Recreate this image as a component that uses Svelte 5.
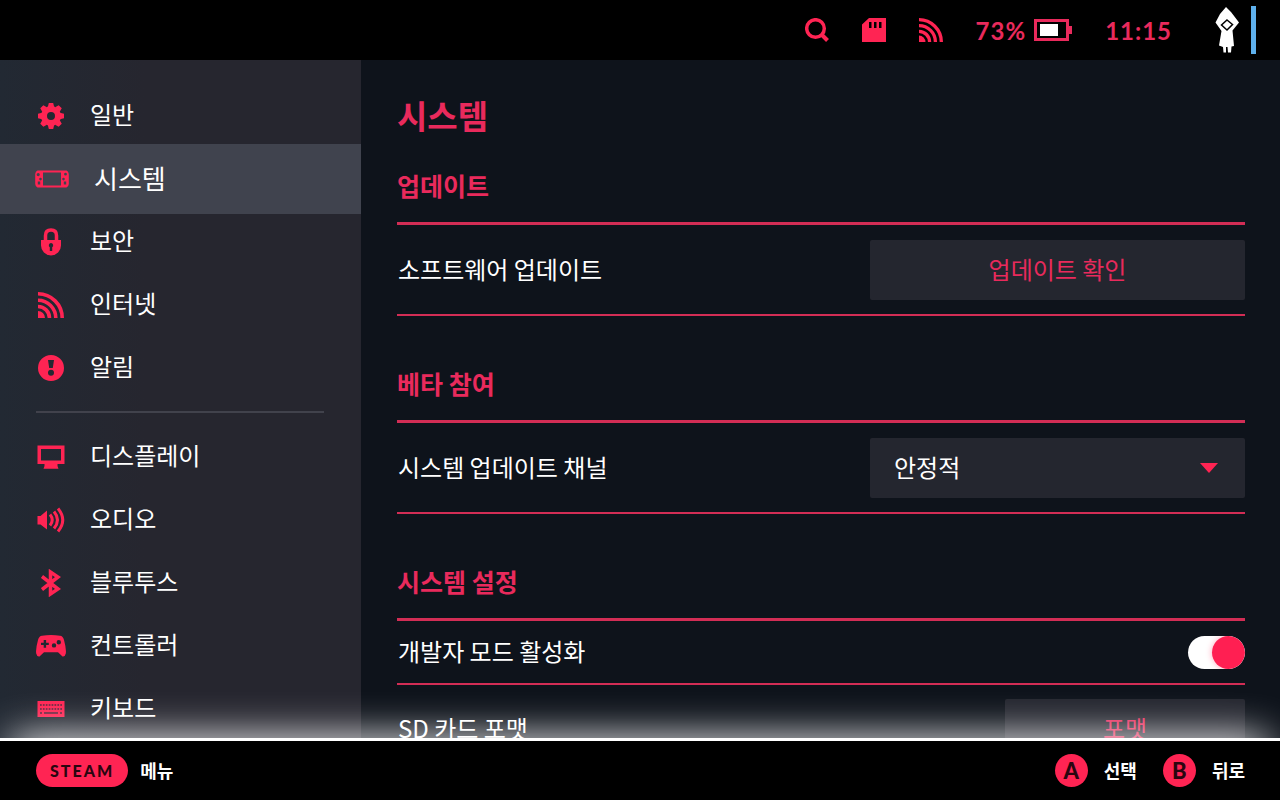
<script>
  const primary = [
    { id: 'general', label: '일반' },
    { id: 'system', label: '시스템' },
    { id: 'security', label: '보안' },
    { id: 'internet', label: '인터넷' },
    { id: 'notice', label: '알림' }
  ];
  const secondary = [
    { id: 'display', label: '디스플레이' },
    { id: 'audio', label: '오디오' },
    { id: 'bluetooth', label: '블루투스' },
    { id: 'controller', label: '컨트롤러' },
    { id: 'keyboard', label: '키보드' }
  ];
  const keyRow = [0, 1, 2, 3, 4, 5, 6, 7];
  const teeth = [0, 45, 90, 135, 180, 225, 270, 315];

  let current = $state('system');
  let channel = $state('stable');
  let devMode = $state(true);
</script>

{#snippet waves()}
  <path d="M0 19A7 7 0 0 1 7 26H0Z" fill="currentColor" />
  <g fill="none" stroke="currentColor" stroke-width="3.600">
    <path d="M0 14.500A11.500 11.500 0 0 1 11.500 26" />
    <path d="M0 8.200A17.800 17.800 0 0 1 17.800 26" />
    <path d="M0 1.800A24.200 24.200 0 0 1 24.200 26" />
  </g>
{/snippet}

{#snippet icon(id)}
  {#if id === 'general'}
    <svg width="26" height="26" viewBox="-13 -13 26 26" fill="currentColor" aria-hidden="true">
      <circle r="7" fill="none" stroke="currentColor" stroke-width="6" />
      {#each teeth as a}
        <path d="M-3.200 -9L-2.200 -13H2.200L3.200 -9Z" transform="rotate({a})" />
      {/each}
    </svg>
  {:else if id === 'system'}
    <svg width="34" height="18" viewBox="0 0 34 18" fill="currentColor" aria-hidden="true">
      <path fill-rule="evenodd" d="M2.500 0.500H31.500Q33.500 1 33.800 4V14Q33.500 17 31.500 17.500H2.500Q0.500 17 0.200 14V4Q0.500 1 2.500 0.500ZM8 2.500V15.500H26V2.500ZM3.200 3A1.600 1.600 0 1 0 3.200 6.200A1.600 1.600 0 1 0 3.200 3ZM5.500 7.800A1.300 1.300 0 1 0 5.500 10.400A1.300 1.300 0 1 0 5.500 7.800ZM2.800 11.500V14.500H5.200V11.500ZM30.500 2.800A1.400 1.400 0 1 0 30.500 5.600A1.400 1.400 0 1 0 30.500 2.800ZM28.500 7.800A1.300 1.300 0 1 0 28.500 10.400A1.300 1.300 0 1 0 28.500 7.800ZM28.800 11.500V14.500H31.200V11.500Z" />
    </svg>
  {:else if id === 'security'}
    <svg width="22" height="28" viewBox="0 0 22 28" fill="currentColor" aria-hidden="true">
      <path d="M5.500 15V7.500Q5.500 2 11 2T16.500 7.500V15" fill="none" stroke="currentColor" stroke-width="3.500" />
      <path fill-rule="evenodd" d="M1 12H21V17.500A10 10 0 0 1 1 17.500ZM11 15A2.300 2.300 0 0 0 9.800 19.200V23H12.200V19.200A2.300 2.300 0 0 0 11 15Z" />
    </svg>
  {:else if id === 'internet'}
    <svg width="26" height="26" viewBox="0 0 26 26" aria-hidden="true">{@render waves()}</svg>
  {:else if id === 'notice'}
    <svg width="26" height="26" viewBox="0 0 26 26" fill="currentColor" aria-hidden="true">
      <path fill-rule="evenodd" d="M13 0A13 13 0 1 1 13 26A13 13 0 1 1 13 0ZM10 5L11.200 13H14.800L16 5ZM13 14.800A3 3 0 1 0 13 20.800A3 3 0 1 0 13 14.800Z" />
    </svg>
  {:else if id === 'display'}
    <svg width="28" height="24" viewBox="0 0 28 24" fill="currentColor" aria-hidden="true">
      <path fill-rule="evenodd" d="M0.500 0.500H27.500V19H20.500V21L21.500 23.800H6.500L7.500 21V19H0.500ZM4 4V15.500H24V4Z" />
    </svg>
  {:else if id === 'audio'}
    <svg width="28" height="26" viewBox="0 0 28 26" fill="none" stroke="currentColor" stroke-width="3" aria-hidden="true">
      <path d="M0.500 9H3.500L10 3.500V22.500L3.500 17.500H0.500Z" fill="currentColor" stroke="none" />
      <path d="M13 7.500Q17.500 13 13 18.500" />
      <path d="M17 4.500Q24 13 17 21.500" />
      <path d="M21 1.500Q30.500 13 21 24.500" />
    </svg>
  {:else if id === 'bluetooth'}
    <svg width="20" height="28" viewBox="0 0 20 28" fill="none" stroke="currentColor" stroke-width="3.500" aria-hidden="true">
      <path d="M1 7.500L17 20L9.500 25V3L17 8L1 20.500" />
    </svg>
  {:else if id === 'controller'}
    <svg width="30" height="22" viewBox="0 0 30 22" fill="currentColor" aria-hidden="true">
      <path fill-rule="evenodd" d="M6 0.800Q15 -0.800 24 0.800Q27 1 28 5Q30.500 14 29.800 18.500Q29 22 26.500 21.500L22 17.200H8L3.500 21.500Q1 22 0.200 18.500Q-0.500 14 2 5Q3 1 6 0.800ZM7.700 5V7.700H5V10.100H7.700V12.800H10.100V10.100H12.800V7.700H10.100V5ZM22.800 5A2.200 2.200 0 1 0 22.800 9.400A2.200 2.200 0 1 0 22.800 5ZM18 8.200A2.200 2.200 0 1 0 18 12.600A2.200 2.200 0 1 0 18 8.200Z" />
    </svg>
  {:else}
    <svg width="28" height="16" viewBox="0 0 28 16" aria-hidden="true">
      <rect x="0.500" width="27" height="16" fill="currentColor" />
      <g fill="#7a2440">
        {#each keyRow as k}
          <rect x={3 + k * 2.900} y="3" width="1.700" height="2" />
          <rect x={3 + k * 2.900} y="7" width="1.700" height="2" />
        {/each}
        <rect x="3" y="11" width="2" height="2" />
        <rect x="7" y="11" width="14" height="2" />
        <rect x="23" y="11" width="2" height="2" />
      </g>
    </svg>
  {/if}
{/snippet}

{#snippet navItem(item)}
  <li>
    <button class="nav-item" class:selected={current === item.id} onclick={() => (current = item.id)}>
      <span class="nav-icon">{@render icon(item.id)}</span>
      <span class="nav-label">{item.label}</span>
    </button>
  </li>
{/snippet}

<div class="shell">
  <header class="topbar">
    <button class="status-button" aria-label="검색">
      <svg width="24" height="24" viewBox="0 0 24 24" fill="none" stroke="currentColor" stroke-width="3.500" aria-hidden="true">
        <circle cx="10.500" cy="10.500" r="8.800" />
        <path d="M16.500 16.500L22.500 22.500" stroke-width="4" />
      </svg>
    </button>
    <svg width="24" height="24" viewBox="0 0 24 24" aria-hidden="true">
      <path fill="currentColor" fill-rule="evenodd" d="M7 0H24V24H0V6.500ZM7 4V10H9.500V4ZM12 4V10H14.500V4ZM17 4V10H19.500V4Z" />
    </svg>
    <svg width="24" height="24" viewBox="0 0 26 26" aria-hidden="true">{@render waves()}</svg>
    <div class="battery">
      <span>73%</span>
      <svg width="38" height="24" viewBox="0 0 38 24" aria-hidden="true">
        <path fill="currentColor" fill-rule="evenodd" d="M0 1H35V8H38V16H35V23H0ZM3 4V20H32V4Z" />
        <rect x="6" y="6" width="18" height="12" fill="#fff" />
      </svg>
    </div>
    <time>11:15</time>
    <div class="profile">
      <svg width="26" height="48" viewBox="0 0 26 48" aria-hidden="true">
        <path fill="#fff" d="M12 1L17 6L25 16.500L18.500 24.500L20 40L17.500 40.500L17 46.500H14L13.500 41H12V46.500H9.500L9 41L5 39.500L7.500 25L1.500 16.500L6 8Z" />
        <path fill="#fff" stroke="#000" stroke-width="1.500" d="M13 14L18.500 18.500L13 24L7.500 19Z" />
      </svg>
      <span class="presence"></span>
    </div>
  </header>

  <div class="body">
    <nav class="sidebar">
      <ul>
        {#each primary as item}{@render navItem(item)}{/each}
      </ul>
      <hr />
      <ul>
        {#each secondary as item}{@render navItem(item)}{/each}
      </ul>
    </nav>

    <main class="content">
      <h1>시스템</h1>
      <section>
        <h2>업데이트</h2>
        <div class="row">
          <span>소프트웨어 업데이트</span>
          <button class="field wide">업데이트 확인</button>
        </div>
      </section>
      <section>
        <h2>베타 참여</h2>
        <div class="row">
          <label for="channel">시스템 업데이트 채널</label>
          <div class="dropdown wide">
            <select id="channel" class="field" bind:value={channel}>
              <option value="stable">안정적</option>
            </select>
            <svg width="18" height="10" viewBox="0 0 18 10" aria-hidden="true">
              <path d="M0 0H18L9 10Z" fill="currentColor" />
            </svg>
          </div>
        </div>
      </section>
      <section>
        <h2>시스템 설정</h2>
        <div class="row">
          <label for="dev">개발자 모드 활성화</label>
          <input id="dev" class="toggle" type="checkbox" bind:checked={devMode} />
        </div>
        <div class="row">
          <span>SD 카드 포맷</span>
          <button class="field narrow">포맷</button>
        </div>
      </section>
    </main>
  </div>

  <footer class="bottombar">
    <button class="hint"><span class="steam">STEAM</span>메뉴</button>
    <div class="actions">
      <button class="hint"><span class="round">A</span>선택</button>
      <button class="hint"><span class="round">B</span>뒤로</button>
    </div>
  </footer>
</div>

<style>
  :global(body) {
    background: #0e131b;
  }

  .shell {
    --accent: #ff2453;
    --accent-text: #e92a5c;
    --line: #d22d55;
    --field: #24262f;
    display: flex;
    flex-direction: column;
    height: 100vh;
    overflow: hidden;
    color: #fff;
    font-family: 'Noto Sans CJK KR', sans-serif;
    font-size: 24px;
    line-height: 33px;
  }

  button,
  select {
    margin: 0;
    padding: 0;
    border: 0;
    background: none;
    color: inherit;
    font: inherit;
    cursor: pointer;
  }

  svg {
    display: block;
    flex: none;
  }

  .topbar {
    display: flex;
    flex: none;
    align-items: center;
    justify-content: flex-end;
    gap: 33px;
    height: 60px;
    padding-right: 24px;
    background: #000;
    color: var(--accent);
    font-family: Lato, sans-serif;
    font-weight: 700;
    letter-spacing: 1px;
  }

  .battery {
    display: flex;
    align-items: center;
    gap: 8px;
    color: var(--accent-text);
  }

  time {
    color: var(--accent-text);
  }

  .profile {
    display: flex;
    gap: 11px;
    margin-left: 9px;
  }

  .presence {
    width: 5px;
    height: 48px;
    background: #5eb0ec;
  }

  .body {
    display: flex;
    flex: 1;
    min-height: 0;
  }

  .sidebar {
    flex: none;
    box-sizing: border-box;
    width: 361px;
    padding-top: 24px;
    overflow: hidden;
    background: linear-gradient(90deg, #222933, #26262f 40%);
  }

  ul {
    margin: 0;
    padding: 0;
    list-style: none;
  }

  .nav-item {
    display: flex;
    align-items: center;
    gap: 24px;
    width: 100%;
    height: 63px;
    padding-left: 36px;
    text-align: left;
  }

  .nav-item.selected {
    gap: 25px;
    height: 70px;
    margin: -3px 0 -4px;
    padding-left: 35px;
    background: #40434e;
    font-size: 26px;
  }

  .nav-icon {
    display: flex;
    justify-content: center;
    min-width: 30px;
    color: var(--accent);
  }

  .nav-label {
    padding-bottom: 4px;
  }

  hr {
    height: 2px;
    margin: 12px 37px 12px 36px;
    border: 0;
    background: #41424c;
  }

  .content {
    flex: 1;
    min-width: 0;
    padding: 31px 35px 0 36px;
    overflow: hidden;
    background: #0e131b;
  }

  h1,
  h2 {
    margin: 0;
    color: var(--accent-text);
    font-weight: 700;
  }

  h1 {
    margin-bottom: 28px;
    font-size: 33px;
    line-height: 48px;
  }

  h2 {
    margin-bottom: 1px;
    padding-bottom: 19px;
    border-bottom: 3px solid var(--line);
    font-size: 25px;
    line-height: 36px;
  }

  section + section {
    margin-top: 49px;
  }

  .row {
    display: flex;
    align-items: center;
    justify-content: space-between;
    padding: 14px 0;
    border-bottom: 2px solid var(--line);
  }

  .row > span,
  .row > label {
    margin-left: 1px;
    padding-bottom: 4px;
    line-height: 29px;
  }

  .field {
    height: 60px;
    padding-bottom: 4px;
    border-radius: 2px;
    background: var(--field);
    color: var(--accent-text);
  }

  .wide {
    width: 375px;
  }

  .narrow {
    width: 240px;
  }

  .dropdown {
    display: grid;
    align-items: center;
    color: var(--accent);
  }

  .dropdown > * {
    grid-area: 1 / 1;
  }

  .dropdown svg {
    justify-self: end;
    margin-right: 27px;
    pointer-events: none;
  }

  select.field {
    width: 100%;
    padding: 0 24px 4px;
    appearance: none;
    color: #fff;
  }

  .toggle {
    appearance: none;
    display: flex;
    width: 57px;
    height: 33px;
    margin: 0;
    border-radius: 17px;
    background: #fff;
    overflow: hidden;
    cursor: pointer;
  }

  .toggle::before {
    content: '';
    width: 33px;
    height: 33px;
    border-radius: 50%;
    background: #ff1f52;
    box-shadow: 0 0 6px rgba(255, 31, 82, 0.4);
  }

  .toggle:checked {
    justify-content: flex-end;
  }

  .bottombar {
    position: relative;
    display: flex;
    flex: none;
    align-items: center;
    justify-content: space-between;
    box-sizing: border-box;
    height: 62px;
    padding: 0 35px 0 36px;
    border-top: 3px solid #fff;
    background: #000;
    box-shadow: 0 -12px 42px -12px #fff;
    font-size: 18px;
    font-weight: 700;
  }

  .hint {
    display: flex;
    align-items: center;
    gap: 12px;
  }

  .actions {
    display: flex;
    gap: 26px;
  }

  .actions .hint {
    gap: 16px;
  }

  .steam,
  .round {
    background: var(--accent);
    color: #2a0610;
    font-family: Lato, sans-serif;
    font-weight: 900;
    line-height: 33px;
  }

  .steam {
    padding: 0 14px;
    border-radius: 17px;
    font-size: 16px;
    letter-spacing: 2px;
  }

  .round {
    width: 33px;
    border-radius: 50%;
    font-size: 22px;
  }
</style>
